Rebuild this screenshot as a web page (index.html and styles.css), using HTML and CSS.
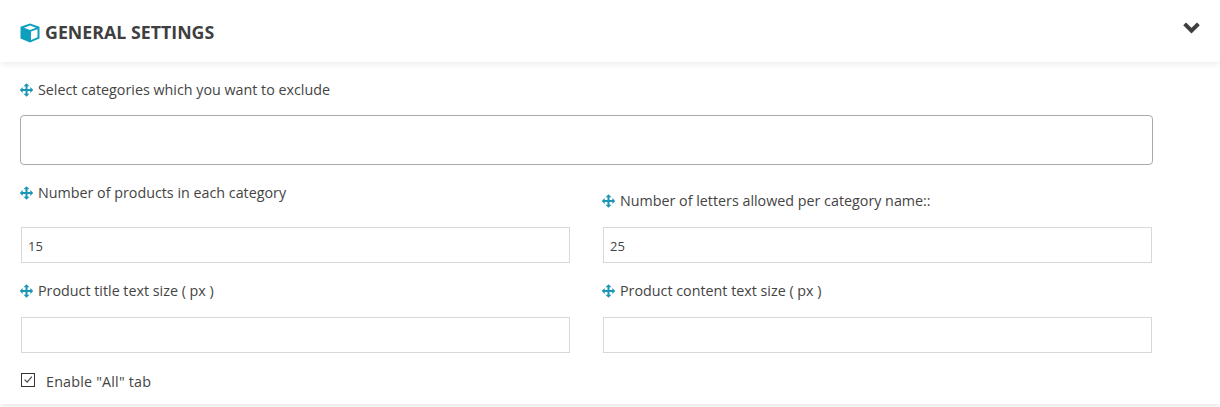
FILE: index.html
```html
<!DOCTYPE html>
<html lang="en">
<head>
    <meta charset="UTF-8">
    <meta name="viewport" content="width=device-width, initial-scale=1.0">
    <title>General Settings</title>
    <link rel="stylesheet" href="styles.css">
</head>
<body>

<svg class="icon-defs" width="0" height="0" aria-hidden="true">
    <symbol id="move" viewBox="0 0 14 14">
        <path d="M7 2v10M2 7h10" fill="none" stroke="currentColor" stroke-width="2.200"/>
        <path d="M7 -0.300l3.200 3.200H3.800zM7 14.300l3.200-3.200H3.800zM-0.300 7l3.200-3.200v6.400zM14.300 7l-3.200-3.200v6.400z" fill="currentColor"/>
    </symbol>
</svg>

<div class="panel">
    <div class="panel-head">
        <h2 class="panel-title">
            <svg class="cube" viewBox="0 0 20 20" aria-hidden="true">
                <path d="M10 0.500L19.500 3.800V15.500L10 19.500L0.500 15.500V3.800Z" fill="#0f9fbe"/>
                <path d="M10 2.600L16 4.700L10 6.900L4 4.700Z" fill="#fff"/>
                <path d="M11 8.600L17.500 6.200V14.200L11 17Z" fill="#fff"/>
            </svg>
            GENERAL SETTINGS
        </h2>
        <svg class="chevron" viewBox="0 0 18 12" aria-hidden="true">
            <path d="M2.500 2.500L9 9L15.500 2.500" fill="none" stroke="#3f3f3f" stroke-width="3.800"/>
        </svg>
    </div>

    <div class="panel-body">
        <label class="field-label label-first"><svg class="move"><use href="#move"/></svg>Select categories which you want to exclude</label>
        <div class="multi-select"></div>

        <div class="field-grid">
            <div class="field">
                <label class="field-label label-top"><svg class="move"><use href="#move"/></svg>Number of products in each category</label>
                <input class="text-input" type="text" value="15">
            </div>
            <div class="field">
                <label class="field-label label-low"><svg class="move"><use href="#move"/></svg>Number of letters allowed per category name::</label>
                <input class="text-input" type="text" value="25">
            </div>
            <div class="field">
                <label class="field-label"><svg class="move"><use href="#move"/></svg>Product title text size ( px )</label>
                <input class="text-input" type="text">
            </div>
            <div class="field">
                <label class="field-label"><svg class="move"><use href="#move"/></svg>Product content text size ( px )</label>
                <input class="text-input" type="text">
            </div>
        </div>

        <label class="check-row">
            <span class="check-box">
                <svg viewBox="0 0 14 14" aria-hidden="true"><path d="M3 6.500L6 9.500L11.500 3" fill="none" stroke="#444" stroke-width="1.400"/></svg>
            </span>
            <span class="check-text">Enable "All" tab</span>
        </label>
    </div>
</div>

</body>
</html>
```

FILE: styles.css
```css
body {
    margin: 0;
    height: 407px;
    overflow: hidden;
    background: #fff;
    color: #444;
    font-family: "Open Sans", sans-serif;
    font-size: 14.3px;
}
.icon-defs {
    display: block;
    height: 0;
}
.panel {
    height: 404px;
    box-shadow: 0 2px 5px rgba(0, 0, 0, 0.1);
}
.panel-head {
    height: 62px;
    box-sizing: border-box;
    padding: 0 20px;
    display: flex;
    justify-content: space-between;
    align-items: flex-start;
    box-shadow: 0 2px 6px rgba(0, 0, 0, 0.08);
}
.panel-title {
    margin: 21px 0 0;
    display: flex;
    align-items: center;
    gap: 5px;
    font-size: 17.8px;
    line-height: 23px;
    font-weight: 700;
    color: #3f3f3f;
}
.cube {
    width: 20px;
    height: 20px;
}
.chevron {
    width: 19px;
    height: 13px;
    margin: 21px -1px 0 0;
}
.panel-body {
    padding: 0 20px;
}
.field-label {
    display: flex;
    align-items: center;
    gap: 5px;
    height: 20px;
    line-height: 20px;
    margin-bottom: 16px;
}
.move {
    width: 13px;
    height: 14px;
    color: #1b96b5;
    overflow: visible;
}
.label-first {
    margin-top: 18px;
    margin-bottom: 15px;
}
.multi-select {
    width: 1133px;
    height: 50px;
    box-sizing: border-box;
    border: 1px solid #aaa;
    border-radius: 4px;
}
.field-grid {
    display: grid;
    grid-template-columns: 549px 549px;
    column-gap: 33px;
    row-gap: 18px;
    margin: 18px 0 0 1px;
}
.field {
    display: flex;
    flex-direction: column;
}
.field .field-label {
    margin-left: -1px;
}
.field .label-top {
    margin-bottom: 24px;
}
.field .label-low {
    margin-top: 8px;
}
.text-input {
    width: 100%;
    height: 36px;
    box-sizing: border-box;
    border: 1px solid #d8d8d8;
    padding: 1px 6px 0;
    font-family: "Open Sans", sans-serif;
    font-size: 13px;
    color: #444;
    background: #fff;
    outline: none;
}
.check-row {
    display: flex;
    align-items: center;
    height: 20px;
    margin: 18px 0 0 1px;
}
.check-box {
    width: 12px;
    height: 12px;
    border: 1px solid #333;
    margin-right: 11px;
    margin-top: -3px;
}
.check-box svg {
    display: block;
    width: 12px;
    height: 12px;
}
.check-text {
    letter-spacing: 0.2px;
}
```
